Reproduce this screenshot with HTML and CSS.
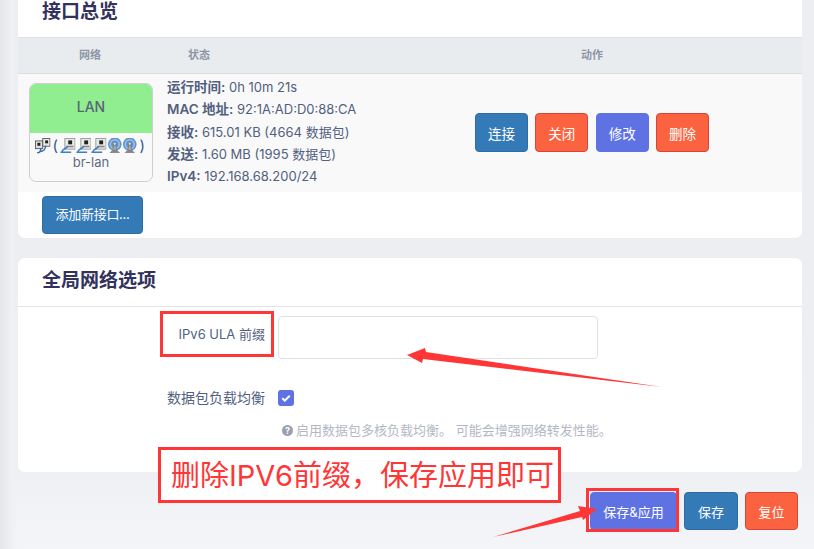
FILE: index.html
```html
<!DOCTYPE html>
<html lang="zh-CN">

<head>
  <meta charset="UTF-8" />
  <title>接口 - LuCI</title>
  <link rel="stylesheet" href="styles.css">
</head>

<body>
  <!-- 小图标 -->
  <svg class="icon-defs" width="0" height="0">
    <defs>
      <symbol id="icon-port" viewBox="0 0 16 16">
        <rect x="5" y="0.5" width="10.5" height="11" fill="#e8e8e8" stroke="#8a8a8a" stroke-width="0.8" />
        <rect x="8.5" y="2.5" width="4" height="4" fill="#222" />
        <rect x="6.5" y="8" width="7.5" height="1.6" fill="#888" />
        <path d="M0.5 14.8h11M2 14.5c0-3.5 4-2.5 6-6" fill="none" stroke="#3b7fc4" stroke-width="1.6" />
      </symbol>
      <symbol id="icon-bridge" viewBox="0 0 16 16">
        <rect x="0.5" y="3" width="7.5" height="8" fill="#ddd" stroke="#555" stroke-width="0.9" />
        <rect x="8" y="0.5" width="7.5" height="8" fill="#e6e6e6" stroke="#555" stroke-width="0.9" />
        <rect x="2.5" y="5" width="3" height="3" fill="#222" />
        <rect x="10.5" y="2.5" width="3" height="3" fill="#222" />
        <path d="M2 15.5c3.5 0 4-3 4-5M5 14c4 0 6-3 6-6" fill="none" stroke="#2f6fb0" stroke-width="1.5" />
      </symbol>
      <symbol id="icon-wifi" viewBox="0 0 16 16">
        <circle cx="8" cy="6.5" r="7" fill="#5f93cf" />
        <circle cx="8" cy="6.5" r="5.4" fill="#9fc1e6" />
        <circle cx="8" cy="6.5" r="3.8" fill="#5f93cf" />
        <path d="M2.5 15.5l2.5-2.5h6l2.500 2.500z" fill="#8a8a8a" />
        <path d="M6 13l1-7h2l1 7z" fill="#a8a8a8" stroke="#666" stroke-width="0.6" />
        <circle cx="8" cy="6" r="1.500" fill="#e4e4e4" stroke="#666" stroke-width="0.6" />
      </symbol>
    </defs>
  </svg>

  <div class="card card-top">
    <h3 class="card-title">接口总览</h3>
    <div class="table-head">
      <div class="col-net">网络</div>
      <div class="col-status">状态</div>
      <div class="col-action">动作</div>
    </div>
    <div class="table-row">
      <div class="col-net">
        <div class="ifacebox">
          <div class="ifacebox-head">LAN</div>
          <div class="ifacebox-body">
            <div class="port-icons">
              <svg class="port-icon"><use href="#icon-bridge" /></svg>
              <span class="paren">(</span>
              <svg class="port-icon"><use href="#icon-port" /></svg>
              <svg class="port-icon"><use href="#icon-port" /></svg>
              <svg class="port-icon"><use href="#icon-port" /></svg>
              <svg class="port-icon"><use href="#icon-wifi" /></svg>
              <svg class="port-icon"><use href="#icon-wifi" /></svg>
              <span class="paren">)</span>
            </div>
            <div class="iface-name">br-lan</div>
          </div>
        </div>
      </div>
      <div class="col-status status-lines">
        <div><strong>运行时间:</strong> 0h 10m 21s</div>
        <div><strong>MAC 地址:</strong> 92:1A:AD:D0:88:CA</div>
        <div><strong>接收:</strong> 615.01 KB (4664 数据包)</div>
        <div><strong>发送:</strong> 1.60 MB (1995 数据包)</div>
        <div><strong>IPv4:</strong> 192.168.68.200/24</div>
      </div>
      <div class="col-action action-buttons">
        <button class="btn btn-blue">连接</button>
        <button class="btn btn-red">关闭</button>
        <button class="btn btn-violet">修改</button>
        <button class="btn btn-red">删除</button>
      </div>
    </div>
    <div class="add-row">
      <button class="btn btn-blue btn-add">添加新接口...</button>
    </div>
  </div>

  <div class="card card-global">
    <h3 class="card-title card-title-line">全局网络选项</h3>
    <div class="form-row form-row-input">
      <label class="form-label form-label-top">IPv6 ULA 前缀</label>
      <input class="form-input" type="text" />
    </div>
    <div class="form-row form-row-check">
      <label class="form-label">数据包负载均衡</label>
      <span class="checkbox">
        <svg width="10" height="10" viewBox="0 0 10 10">
          <path d="M1.3 5.2l2.5 2.5 4.9-5" fill="none" stroke="#fff" stroke-width="2" />
        </svg>
      </span>
    </div>
    <div class="form-help">
      <span class="help-icon">?</span>启用数据包多核负载均衡。 可能会增强网络转发性能。
    </div>
  </div>

  <div class="page-actions">
    <button class="btn btn-violet btn-apply">保存&amp;应用</button>
    <button class="btn btn-blue btn-save">保存</button>
    <button class="btn btn-red">复位</button>
  </div>

  <!-- 截图上的红色标注 -->
  <div class="mark mark-label"></div>
  <div class="mark mark-note">删除IPV6前缀，保存应用即可</div>
  <div class="mark mark-apply"></div>
  <svg class="arrows" width="814" height="549" viewBox="0 0 814 549">
    <path d="M407 355L425 348 426 352 662 387 423 359 422 363z" fill="#ff3636" />
    <path d="M597 509L578 506 580 511 493 537 582 517 583 520z" fill="#ff3636" />
  </svg>
</body>

</html>
```

FILE: styles.css
```css
* {
  box-sizing: border-box;
}

body {
  position: relative;
  margin: 0;
  width: 814px;
  height: 549px;
  padding: 0 12px 0 18px;
  overflow: hidden;
  font-family: Inter, "Noto Sans CJK SC", sans-serif;
  font-size: 13px;
  color: #525f7f;
  background:
    linear-gradient(to right, #e4e6ea, #f0f1f5 12px, transparent 18px),
    linear-gradient(#eceef2 46%, #eef0f4 86%, #f4f5f8);
}

.icon-defs {
  position: absolute;
}

/* 卡片 */
.card {
  background-color: #ffffff;
  border-radius: 0 0 7px 7px;
}

.card-top {
  height: 238px;
}

.card-global {
  height: 214px;
  margin-top: 20px;
  border-radius: 7px;
}

.card-title {
  height: 37px;
  margin: 0;
  padding-left: 24px;
  font-size: 19px;
  line-height: 23px;
  font-weight: 700;
  color: #32325d;
}

.card-title-line {
  height: 49px;
  padding-top: 11px;
  border-bottom: 1px solid #e2e4ea;
}

/* 表格 */
.table-head,
.table-row {
  display: flex;
}

.table-head {
  height: 37px;
  border-top: 1px solid #dee0e4;
  border-bottom: 1px solid #dadcdf;
  background-color: #e9ecef;
  font-size: 11px;
  font-weight: 600;
  line-height: 34px;
  color: #8e97a5;
}

.table-head .col-status {
  padding-left: 26px;
}

.table-head .col-net,
.table-head .col-action {
  text-align: center;
}

.table-row {
  height: 118px;
  background-color: #f9f9f9;
}

.col-net {
  width: 144px;
}

.col-status {
  width: 220px;
}

.col-action {
  flex: 1;
}

.ifacebox {
  width: 124px;
  height: 99px;
  margin: 9px 0 0 11px;
  border: 1px solid #cfcfcf;
  border-radius: 7px;
  overflow: hidden;
  text-align: center;
}

.ifacebox-head {
  height: 49px;
  background-color: #90ee90;
  font-size: 14px;
  font-weight: 500;
  line-height: 46px;
  color: #5a6478;
}

.port-icons {
  display: flex;
  justify-content: center;
  align-items: center;
  height: 18px;
  margin-top: 4px;
}

.port-icon {
  width: 15.5px;
  height: 15.5px;
  flex: none;
}

.paren {
  margin: 0 2px;
  font-size: 15px;
  line-height: 18px;
  color: #32558c;
}

.iface-name {
  font-size: 13px;
  line-height: 14px;
  color: #5f6b85;
}

.status-lines {
  padding: 2px 0 0 5px;
  line-height: 22.3px;
  white-space: nowrap;
}

.status-lines strong {
  font-size: 13.5px;
  font-weight: 600;
}

.action-buttons {
  display: flex;
  justify-content: center;
  align-items: center;
  gap: 7.4px;
  padding-bottom: 1px;
}

.action-buttons .btn {
  font-size: 13.5px;
}

/* 按钮 */
.btn {
  width: 53px;
  height: 39px;
  padding: 0;
  border: 1px solid transparent;
  border-radius: 4px;
  font-family: inherit;
  font-size: 13px;
  color: #ffffff;
  cursor: pointer;
}

.btn-blue {
  background-color: #337ab7;
  border-color: #2e6da4;
}

.btn-red {
  background-color: #fb6340;
  border-color: #d9443a;
}

.btn-violet {
  background-color: #5e72e4;
  border-color: #5e72e4;
}

.add-row {
  padding: 4px 0 0 24px;
}

.btn-add {
  width: 101px;
  height: 38px;
  padding-bottom: 3px;
  letter-spacing: -0.3px;
}

/* 表单 */
.form-row {
  display: flex;
  align-items: center;
  gap: 13px;
}

.form-row-input {
  margin-top: 9px;
}

.form-row-check {
  margin-top: 28px;
}

.form-label {
  width: 247px;
  padding-bottom: 2px;
  text-align: right;
  font-size: 14px;
  white-space: nowrap;
}

.form-label-top {
  align-self: flex-start;
  padding-top: 8px;
  font-size: 13px;
}

.form-input {
  width: 320px;
  height: 43px;
  border: 1px solid #dee2e6;
  border-radius: 4px;
  background-color: #ffffff;
}

.checkbox {
  display: flex;
  justify-content: center;
  align-items: center;
  width: 16px;
  height: 16px;
  border-radius: 3px;
  background-color: #5e72e4;
}

.form-help {
  display: flex;
  align-items: center;
  margin: 12px 0 0 264px;
  line-height: 18px;
  color: #b4b8c6;
  white-space: nowrap;
}

.help-icon {
  width: 11px;
  height: 11px;
  margin-right: 3px;
  border-radius: 50%;
  background-color: #9aa0b0;
  font-size: 9px;
  font-weight: 700;
  line-height: 11px;
  text-align: center;
  color: #ffffff;
}

/* 底部按钮 */
.page-actions {
  display: flex;
  justify-content: flex-end;
  gap: 7px;
  margin-top: 20px;
  padding-right: 4px;
}

.btn-apply {
  width: 87px;
}

.btn-save {
  width: 54px;
}

.page-actions .btn {
  height: 38px;
}

/* 标注 */
.mark {
  position: absolute;
  border: 3px solid #ff3636;
}

.mark-label {
  left: 160px;
  top: 311px;
  width: 114px;
  height: 46px;
}

.mark-note {
  left: 158px;
  top: 447px;
  width: 403px;
  height: 56px;
  padding-left: 10px;
  font-size: 29px;
  line-height: 51px;
  color: #ff3636;
  background-color: #ffffff;
  white-space: nowrap;
}

.mark-apply {
  left: 586px;
  top: 488px;
  width: 93px;
  height: 44px;
}

.arrows {
  position: absolute;
  left: 0;
  top: 0;
  pointer-events: none;
}
```
